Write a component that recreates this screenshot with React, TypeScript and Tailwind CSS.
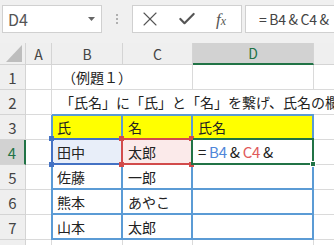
import { Check, X } from "lucide-react";

const font = "font-['Noto_Sans_CJK_JP','Liberation_Sans',sans-serif]";

function RowHead({ n, active }: { n: number; active?: boolean }) {
  return (
    <div
      className={`w-[26px] shrink-0 flex items-center justify-center text-[15px] leading-none border-b border-b-[#d4d4d4] ${
        active
          ? "bg-[#d2d2d2] text-[#217346] border-r-2 border-r-[#217346]"
          : "bg-[#efefef] text-[#444] border-r border-r-[#d4d4d4]"
      }`}
    >
      {n}
    </div>
  );
}

function ColHead({ label, w, active }: { label: string; w: string; active?: boolean }) {
  return (
    <div
      className={`${w} shrink-0 flex items-center justify-center text-[14px] leading-none border-r border-r-[#d4d4d4] ${
        active
          ? "bg-[#d2d2d2] text-[#217346] border-b-2 border-b-[#217346]"
          : "bg-[#efefef] text-[#444] border-b border-b-[#d4d4d4]"
      }`}
    >
      {label}
    </div>
  );
}

const blank = "shrink-0 border-r border-b border-[#dadada]";
const cellText = "flex items-center pl-[5px] text-[14px] leading-none text-[#222] whitespace-nowrap";
const tbl = "shrink-0 border-r-2 border-b-2 border-[#5b9bd5]";

const rows = [
  { n: 5, b: "佐藤", c: "一郎" },
  { n: 6, b: "熊本", c: "あやこ" },
  { n: 7, b: "山本", c: "太郎" },
];

export default function App() {
  return (
    <div className={`w-[334px] h-[245px] overflow-hidden bg-white ${font}`}>
      {/* formula bar */}
      <div className="h-[43px] bg-[#f0f0f0] flex items-start pt-[5px] pl-[2px]">
        <div className="w-[100px] h-[28px] bg-white border border-[#d0d0d0] flex items-center justify-between pl-[5px] pr-[6px]">
          <span className="text-[16px] text-[#555] leading-none">D4</span>
          <svg width="7" height="4" viewBox="0 0 7 4">
            <path d="M0 0h7L3.5 4z" fill="#666" />
          </svg>
        </div>
        <div className="w-[30px] h-[28px] flex flex-col items-center justify-center gap-[2px]">
          <span className="w-[2px] h-[2px] bg-[#b0b0b0]" />
          <span className="w-[2px] h-[2px] bg-[#b0b0b0]" />
          <span className="w-[2px] h-[2px] bg-[#b0b0b0]" />
        </div>
        <div className="w-[110px] h-[28px] bg-white border border-[#d0d0d0] flex items-center pl-[5px] text-[#555]">
          <X size={24} strokeWidth={1.1} />
          <Check size={20} strokeWidth={2.6} className="ml-[15px]" />
          <span className="ml-[19px] font-['Liberation_Serif',serif] italic text-[17px] leading-none text-[#555]">
            f<span className="text-[12px]">x</span>
          </span>
        </div>
        <div className="ml-[3px] flex-1 -mr-[4px] h-[28px] bg-white border border-[#d0d0d0] flex items-center pl-[13px] text-[14px] text-[#444] tracking-[-0.3px] whitespace-nowrap">
          = B4 &amp; C4 &amp;
        </div>
      </div>

      {/* column headers */}
      <div className="flex h-[22px]">
        <div className="w-[26px] shrink-0 bg-[#efefef] border-r border-b border-[#d4d4d4] flex items-end justify-end pr-[3px] pb-[2px]">
          <svg width="16" height="17" viewBox="0 0 16 17">
            <path d="M16 0V17H0z" fill="#bdbdbd" />
          </svg>
        </div>
        <ColHead label="A" w="w-[26px]" />
        <ColHead label="B" w="w-[71px]" />
        <ColHead label="C" w="w-[70px]" />
        <ColHead label="D" w="w-[121px]" active />
        <div className="flex-1 bg-[#efefef] border-b border-[#d4d4d4]" />
      </div>

      {/* row 1 */}
      <div className="flex h-[25px]">
        <RowHead n={1} />
        <div className={`${blank} w-[26px]`} />
        <div className={`${blank} w-[141px] ${cellText} pl-[10px]`}>（例題１）</div>
        <div className={`${blank} w-[121px]`} />
        <div className="flex-1 border-b border-[#dadada]" />
      </div>

      {/* row 2 */}
      <div className="flex h-[25px]">
        <RowHead n={2} />
        <div className={`${blank} w-[26px]`} />
        <div className={`flex-1 border-b border-[#dadada] overflow-hidden ${cellText} pl-[8px]`}>
          「氏名」に「氏」と「名」を繋げ、氏名の欄を作る
        </div>
      </div>

      {/* row 3 */}
      <div className="flex h-[25px]">
        <RowHead n={3} />
        <div className={`${blank} w-[26px]`} />
        <div className={`${tbl} w-[71px] bg-[#ffff00] ${cellText} shadow-[inset_1px_0_0_#5b9bd5,-1px_0_0_#5b9bd5,inset_0_1px_0_#5b9bd5,0_-1px_0_#5b9bd5]`}>
          氏
        </div>
        <div className={`${tbl} w-[70px] bg-[#ffff00] ${cellText} shadow-[inset_0_1px_0_#5b9bd5,0_-1px_0_#5b9bd5]`}>
          名
        </div>
        <div className={`${tbl} w-[121px] bg-[#ffff00] ${cellText} shadow-[inset_0_1px_0_#5b9bd5,0_-1px_0_#5b9bd5]`}>
          氏名
        </div>
        <div className="flex-1 border-b border-[#dadada]" />
      </div>

      {/* row 4 */}
      <div className="flex h-[25px]">
        <RowHead n={4} active />
        <div className={`${blank} w-[26px]`} />
        <div className={`relative shrink-0 w-[71px] bg-[#e8eef9] border-r-2 border-b-2 border-[#4472c4] ${cellText} shadow-[inset_1px_0_0_#4472c4,-1px_0_0_#4472c4,0_-2px_0_#4472c4]`}>
          田中
          <span className="absolute -left-[3px] -top-[4px] w-[5px] h-[5px] bg-[#4472c4]" />
          <span className="absolute -left-[3px] -bottom-[4px] w-[5px] h-[5px] bg-[#4472c4]" />
        </div>
        <div className={`relative shrink-0 w-[70px] bg-[#fbeaea] border-r-2 border-b-2 border-[#d24b4b] ${cellText} shadow-[-2px_0_0_#d24b4b,0_-2px_0_#d24b4b]`}>
          太郎
          <span className="absolute -left-[4px] -top-[4px] w-[5px] h-[5px] bg-[#d24b4b]" />
          <span className="absolute -left-[4px] -bottom-[4px] w-[5px] h-[5px] bg-[#d24b4b]" />
          <span className="absolute -right-[3px] -top-[4px] w-[5px] h-[5px] bg-[#d24b4b]" />
          <span className="absolute -right-[3px] -bottom-[4px] w-[5px] h-[5px] bg-[#d24b4b]" />
        </div>
        <div className={`relative shrink-0 w-[121px] bg-white border-r-2 border-b-2 border-[#217346] ${cellText} text-[15px] text-[#222] shadow-[-2px_0_0_#217346,0_-2px_0_#217346]`}>
          <span className="tracking-[-0.3px]">
            = <span className="text-[#4f86d9]">B4</span> &amp; <span className="text-[#e05a5a]">C4</span> &amp;
          </span>
          <span className="absolute -right-[4px] -bottom-[4px] w-[6px] h-[6px] bg-[#217346] border border-white" />
        </div>
        <div className="flex-1 border-b border-[#dadada]" />
      </div>

      {/* rows 5-7 */}
      {rows.map((r) => (
        <div key={r.n} className="flex h-[25px]">
          <RowHead n={r.n} />
          <div className={`${blank} w-[26px]`} />
          <div className={`${tbl} w-[71px] ${cellText} shadow-[inset_1px_0_0_#5b9bd5,-1px_0_0_#5b9bd5]`}>{r.b}</div>
          <div className={`${tbl} w-[70px] ${cellText}`}>{r.c}</div>
          <div className={`${tbl} w-[121px]`} />
          <div className="flex-1 border-b border-[#dadada]" />
        </div>
      ))}

      {/* row 8 */}
      <div className="flex h-[25px]">
        <RowHead n={8} />
        <div className={`${blank} w-[26px]`} />
        <div className={`${blank} w-[71px]`} />
        <div className={`${blank} w-[70px]`} />
        <div className={`${blank} w-[121px]`} />
        <div className="flex-1 border-b border-[#dadada]" />
      </div>
    </div>
  );
}
